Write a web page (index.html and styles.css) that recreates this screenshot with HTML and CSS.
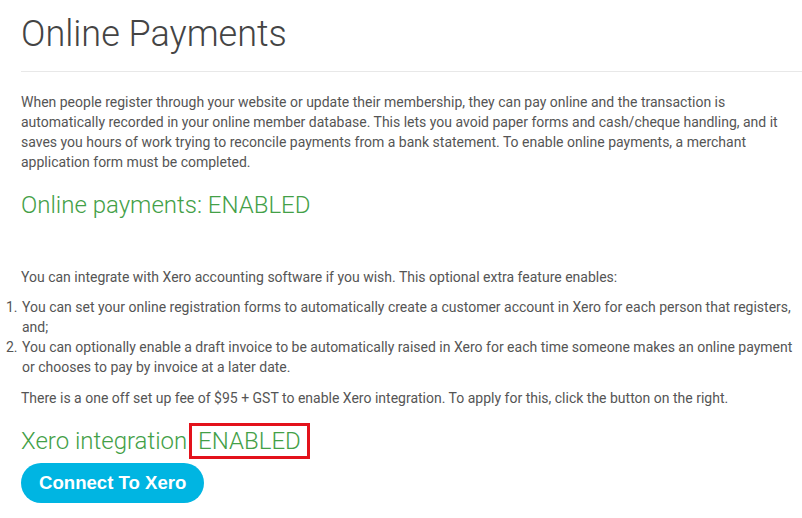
FILE: index.html
```html
<!DOCTYPE html>
<html lang="en">
<head>
    <meta charset="UTF-8">
    <meta name="viewport" content="width=device-width, initial-scale=1.0">
    <title>Online Payments</title>
    <link rel="stylesheet" href="styles.css">
</head>
<body>
    <div class="page">
        <h1 class="page-title">Online Payments</h1>

        <p>When people register through your website or update their membership, they can pay online and the transaction is automatically recorded in your online member database. This lets you avoid paper forms and cash/cheque handling, and it saves you hours of work trying to reconcile payments from a bank statement. To enable online payments, a merchant application form must be completed.</p>

        <h2 class="status">Online payments: ENABLED</h2>

        <p class="xero-intro">You can integrate with Xero accounting software if you wish. This optional extra feature enables:</p>
        <ol class="xero-list">
            <li>You can set your online registration forms to automatically create a customer account in Xero for each person that registers, and;</li>
            <li>You can optionally enable a draft invoice to be automatically raised in Xero for each time someone makes an online payment or chooses to pay by invoice at a later date.</li>
        </ol>
        <p class="xero-fee">There is a one off set up fee of $95 + GST to enable Xero integration. To apply for this, click the button on the right.</p>

        <h2 class="status xero-status">Xero integration <span class="highlight">ENABLED</span></h2>
        <button type="button" class="btn-xero">Connect To Xero</button>
    </div>
</body>
</html>
```

FILE: styles.css
```css
body {
    margin: 0;
    font-family: Roboto, Arial, sans-serif;
    background-color: #fff;
    color: #555;
}
.page {
    padding: 0 0 0 21px;
}
.page-title {
    font-size: 36px;
    font-weight: 300;
    color: #444;
    margin: 0;
    padding: 11px 0 14px;
    line-height: 46px;
    border-bottom: 1px solid #e8e8e8;
}
p {
    font-size: 14px;
    line-height: 20px;
    margin: 20px 0 10px;
    padding-right: 20px;
}
.status {
    font-size: 24px;
    font-weight: 300;
    color: #43a047;
    margin: 18px 0 0;
    line-height: 30px;
}
.xero-intro {
    margin-top: 47px;
}
.xero-list {
    font-size: 14px;
    line-height: 20px;
    margin: 0;
    padding: 0 8px 0 0;
}
.xero-list li {
    padding-left: 1px;
}
.xero-fee {
    margin-top: 11px;
}
.xero-status {
    margin-top: 15px;
    line-height: 36px;
}
.highlight {
    border: 3px solid #e3121b;
    padding: 1px 6px 1px 6px;
    margin-left: -4px;
}
.btn-xero {
    display: block;
    margin: 4px 0 0;
    padding: 0 18px;
    height: 40px;
    border: none;
    border-radius: 20px;
    background-color: #00b5e2;
    color: #fff;
    font-family: "Liberation Sans", Arial, sans-serif;
    font-weight: bold;
    font-size: 18.6px;
    cursor: pointer;
}
```
